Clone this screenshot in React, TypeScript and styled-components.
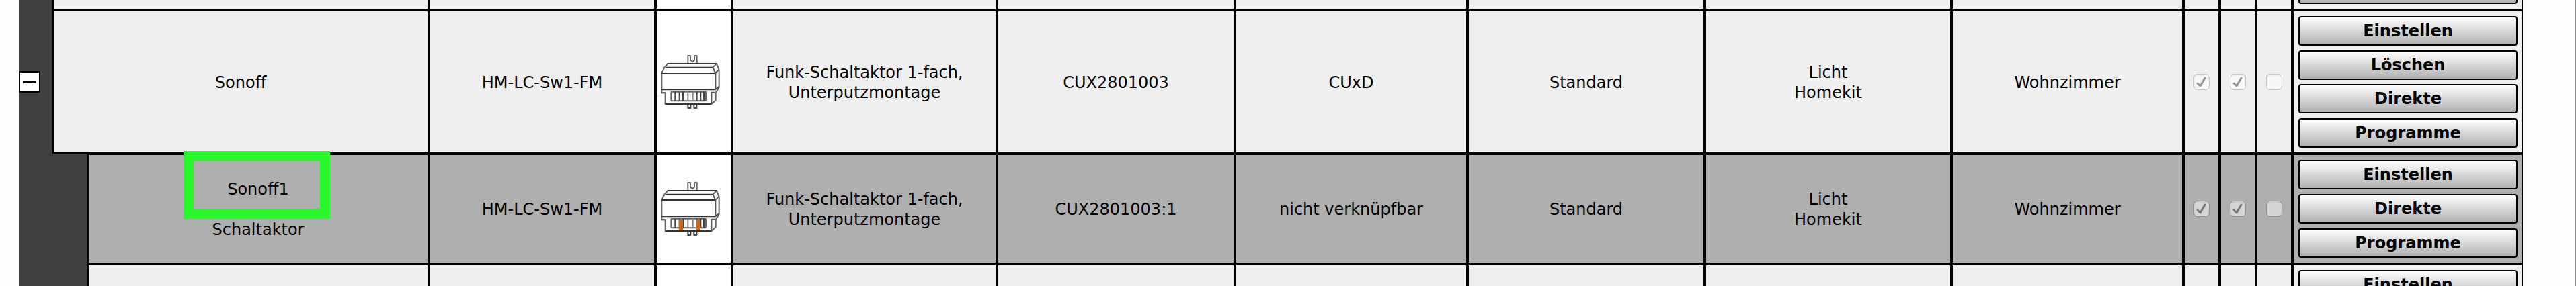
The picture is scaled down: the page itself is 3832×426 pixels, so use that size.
import React from "react";
import styled, { createGlobalStyle, css } from "styled-components";

const GlobalStyle = createGlobalStyle`
  *, *::before, *::after { box-sizing: border-box; }
  html, body { margin: 0; background: #fefefe; }
  body { overflow: hidden; font-family: "DejaVu Sans", Verdana, sans-serif; font-size: 24px; line-height: 30px; color: #000; }
`;

const Page = styled.main`
  height: 100vh;
  overflow: hidden;
  padding-left: 28px;
  padding-right: 77px;
  border-right: 2px solid #8c8c8c;
`;

const DeviceTable = styled.table`
  width: 100%;
  table-layout: fixed;
  border-collapse: separate;
  border-spacing: 0;
`;

const Col = styled.col<{ $w: number }>`
  width: ${(p) => p.$w}px;
`;

type Tone = "device" | "channel";

const Row = styled.tr<{ $tone: Tone }>`
  background: ${(p) => (p.$tone === "channel" ? "#afafaf" : "#efefef")};
`;

const Gutter = styled.td`
  padding: 0;
  background: #404040;
  vertical-align: middle;
`;

const Cell = styled.td<{ $white?: boolean; $cut?: boolean }>`
  padding: 0;
  border: 2px solid #000;
  text-align: center;
  vertical-align: middle;
  ${(p) => p.$white && css`background: #fff;`}
  ${(p) => p.$cut && css`border-top: 0;`}
`;

const TextCell = styled(Cell)`
  padding-top: 2px;
`;

const Toggle = styled.button`
  display: block;
  width: 32px;
  height: 32px;
  padding: 0;
  border: 0;
  background: none;
`;

const Actions = styled.div<{ $height?: number }>`
  display: flex;
  flex-direction: column;
  justify-content: space-between;
  height: ${(p) => (p.$height ? `${p.$height}px` : "auto")};
  padding: 7px 6px 7px 7px;
`;

const CutActions = styled.div`
  display: flex;
  flex-direction: column;
  justify-content: flex-end;
  height: 13px;
  overflow: hidden;
  padding: 0 6px 7px 7px;
`;

const ActionButton = styled.button`
  flex: none;
  height: 44px;
  padding: 0;
  border: 2px solid #000;
  border-radius: 4px;
  background: linear-gradient(#fff, #b0b0b0);
  font: bold 24px/30px "DejaVu Sans", Verdana, sans-serif;
  color: #000;
`;

const Check = styled.input<{ $tone: Tone }>`
  appearance: none;
  display: block;
  width: 24px;
  height: 24px;
  margin: 0 auto;
  border: 1px solid ${(p) => (p.$tone === "channel" ? "#8f8f8f" : "#c4c4c4")};
  border-radius: 6px;
  background: ${(p) => (p.$tone === "channel" ? "#d6d6d6" : "#f8f8f8")};
  box-shadow: inset 0 1px 2px rgba(0, 0, 0, 0.1);
`;

const CheckBox = styled.label`
  display: grid;
  place-items: center;
  > * { grid-area: 1 / 1; }
`;

const Tick = styled.svg`
  width: 24px;
  height: 24px;
  pointer-events: none;
`;

const Marked = styled.div`
  position: relative;
`;

const Marker = styled.span`
  position: absolute;
  top: -42px;
  left: calc(50% - 111px);
  width: 218px;
  height: 101px;
  border: 15px solid #28f82c;
`;

const Picture = styled.svg`
  display: block;
  width: 100px;
  height: 100px;
  margin: 0 auto;
`;

function ActuatorPicture({ active = false }: { active?: boolean }) {
  return (
    <Picture viewBox="36 6 300 300" role="img" aria-label="HM-LC-Sw1-FM" fill="none" stroke="#444" strokeWidth="6" strokeLinejoin="round">
      <path d="M160 73V39h11v20l9 8 9-8V39h11v34" stroke="#666" />
      <path d="M160 257v16h12v-16M187 257v16h12v-16" />
      <path d="M70 75H288L299 103V180L284 205V238L265 255H59V205H43V117L55 92Z" stroke="#666" />
      <path d="M70 75H288M60 92H271M43 117H283M43 190H283M59 255H265" stroke="#333" />
      <path d="M271 92L288 75M271 92L283 117L299 100M283 117V190L299 176M283 203H265V255M43 205H59" stroke="#555" />
      <rect x="85" y="200" width="155" height="41" rx="4" stroke="#666" />
      <path d="M103 200V241M122 200V241M138 200V241M200 200V241M217 200V241M231 200V241" stroke="#444" />
      <path d="M160 200V241M182 200V241" stroke="#888" />
      {active && <path d="M120 204h18v48h-18zM198 204h18v48h-18z" fill="#cb661b" stroke="none" />}
    </Picture>
  );
}

function Flag({ checked, tone, label }: { checked: boolean; tone: Tone; label: string }) {
  return (
    <CheckBox>
      <Check type="checkbox" disabled checked={checked} readOnly $tone={tone} aria-label={label} />
      {checked && (
        <Tick viewBox="0 0 24 24" fill="none" stroke={tone === "channel" ? "#777" : "#949494"} strokeWidth="3" strokeLinecap="round" strokeLinejoin="round">
          <path d="M6 14l4 4 7-12" />
        </Tick>
      )}
    </CheckBox>
  );
}

const columns = [50, 52, 508, 337, 114, 394, 354, 346, 353, 367, 345, 54, 54, 54, 343];

interface Entry {
  tone: Tone;
  name: React.ReactNode;
  serial: string;
  mode: string;
  actions: string[];
  height: number;
}

function EntryCells({ entry, nameSpan }: { entry: Entry; nameSpan: number }) {
  const flags: [string, boolean][] = [["bedienbar", true], ["sichtbar", true], ["protokolliert", false]];
  return (
    <>
      <TextCell colSpan={nameSpan}>{entry.name}</TextCell>
      <TextCell>HM-LC-Sw1-FM</TextCell>
      <Cell $white><ActuatorPicture active={entry.tone === "channel"} /></Cell>
      <TextCell>Funk-Schaltaktor 1-fach,<br />Unterputzmontage</TextCell>
      <TextCell>{entry.serial}</TextCell>
      <TextCell>{entry.mode}</TextCell>
      <TextCell>Standard</TextCell>
      <TextCell>Licht<br />Homekit</TextCell>
      <TextCell>Wohnzimmer</TextCell>
      {flags.map(([label, on]) => (
        <Cell key={label}><Flag checked={on} tone={entry.tone} label={label} /></Cell>
      ))}
      <Cell>
        <Actions $height={entry.height}>
          {entry.actions.map((a) => <ActionButton type="button" key={a}>{a}</ActionButton>)}
        </Actions>
      </Cell>
    </>
  );
}

const blanks = (n: number, cut: boolean) =>
  Array.from({ length: n }, (_, i) => <Cell key={i} $cut={cut} $white={i === 1} />);

const device: Entry = {
  tone: "device",
  name: "Sonoff",
  serial: "CUX2801003",
  mode: "CUxD",
  actions: ["Einstellen", "Löschen", "Direkte", "Programme"],
  height: 210,
};

const channel: Entry = {
  tone: "channel",
  name: <Marked>Sonoff1<br /><br />Schaltaktor<Marker /></Marked>,
  serial: "CUX2801003:1",
  mode: "nicht verknüpfbar",
  actions: ["Einstellen", "Direkte", "Programme"],
  height: 160,
};

export default function App() {
  return (
    <>
      <GlobalStyle />
      <Page>
        <DeviceTable>
          <colgroup>{columns.map((w, i) => <Col key={i} $w={w} />)}</colgroup>
          <tbody>
            <Row $tone="device">
              <Gutter />
              <Cell colSpan={2} $cut />
              {blanks(11, true)}
              <Cell $cut>
                <CutActions><ActionButton type="button" aria-label="Programme" /></CutActions>
              </Cell>
            </Row>
            <Row $tone="device">
              <Gutter>
                <Toggle type="button" aria-label="Kanäle ausblenden">
                  <svg width="32" height="32" viewBox="0 0 32 32">
                    <rect x="1" y="1" width="30" height="30" rx="1" fill="#fff" stroke="#000" strokeWidth="2" />
                    <path d="M6 16H26" stroke="#000" strokeWidth="4" />
                  </svg>
                </Toggle>
              </Gutter>
              <EntryCells entry={device} nameSpan={2} />
            </Row>
            <Row $tone="channel">
              <Gutter colSpan={2} />
              <EntryCells entry={channel} nameSpan={1} />
            </Row>
            <Row $tone="device">
              <Gutter colSpan={2} />
              <Cell />
              {blanks(11, false)}
              <Cell>
                <Actions><ActionButton type="button">Einstellen</ActionButton></Actions>
              </Cell>
            </Row>
          </tbody>
        </DeviceTable>
      </Page>
    </>
  );
}
